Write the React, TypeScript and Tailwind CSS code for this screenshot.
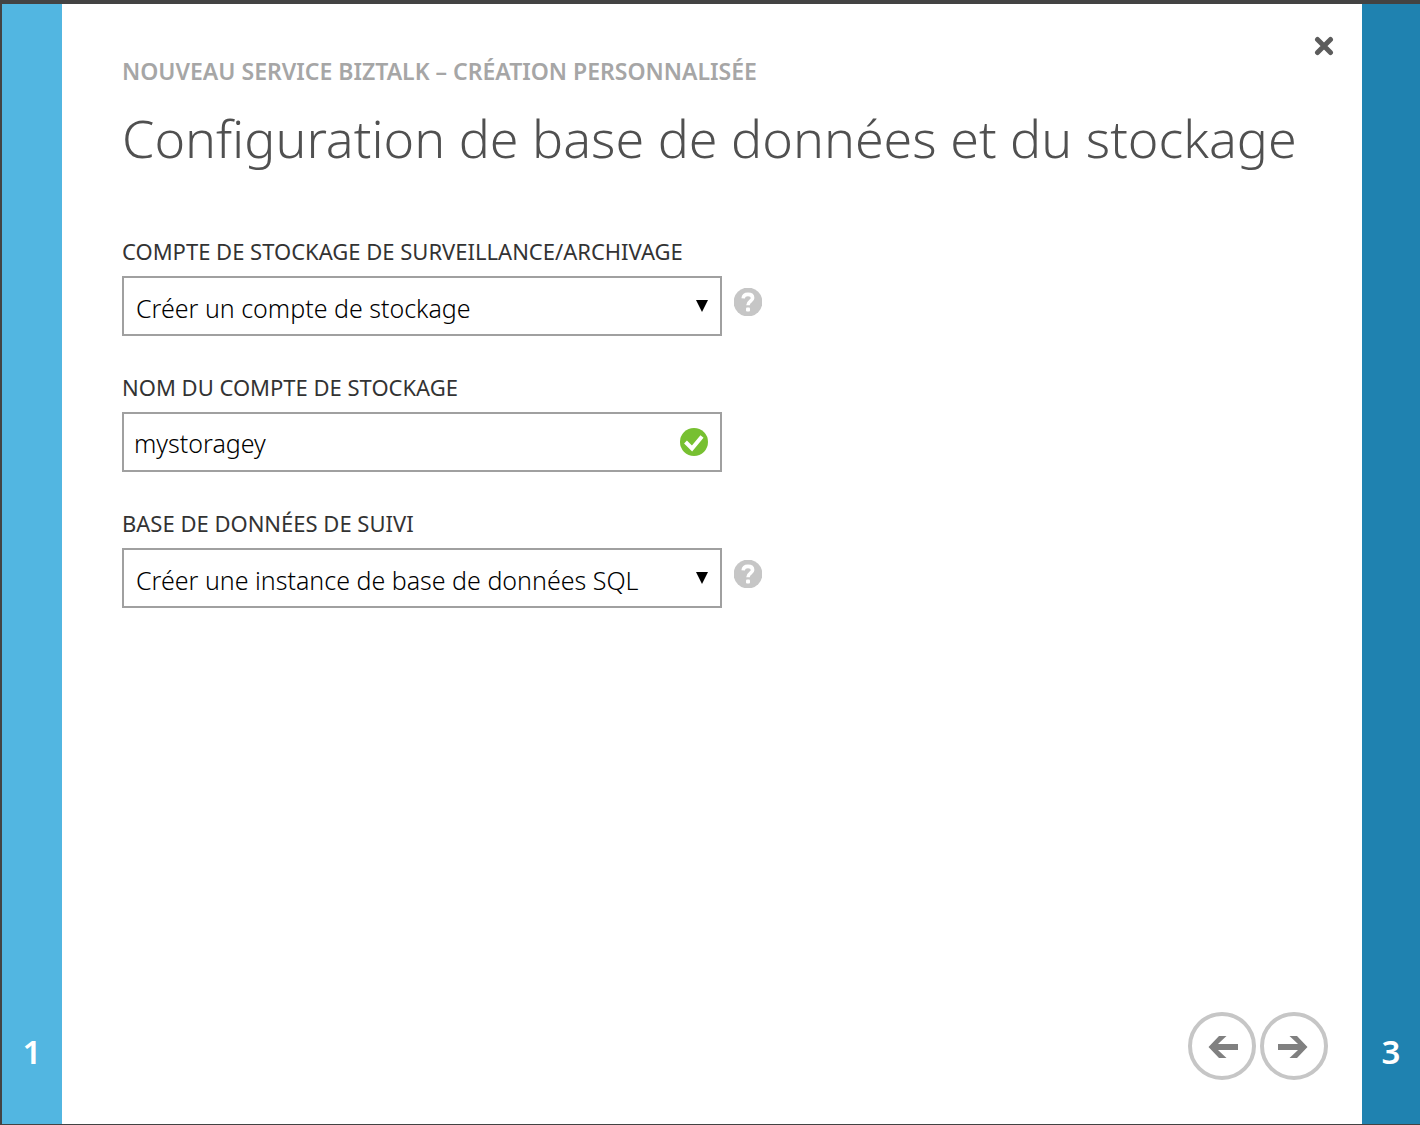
import React from "react";

interface FieldProps {
  id: string;
  label: string;
  help?: boolean;
  children: React.ReactNode;
}

function HelpButton({ label }: { label: string }) {
  return (
    <button type="button" aria-label={`Aide : ${label}`} className="shrink-0 mb-2">
      <svg width="28" height="28" viewBox="0 0 28 28" fill="none">
        <circle cx="14" cy="14" r="14.4" fill="#c6c6c6" />
        <path
          d="M9.2 10.4C9.4 7.8 11.4 6.4 14 6.4C16.8 6.4 18.6 7.8 18.6 10C18.6 13.2 14 13.2 14 17.2"
          stroke="#fff"
          strokeWidth="3.6"
        />
        <rect x="12" y="19.4" width="4" height="4.2" rx="1" fill="#fff" />
      </svg>
    </button>
  );
}

function Field({ id, label, help, children }: FieldProps) {
  return (
    <div className="flex flex-col">
      <label
        htmlFor={id}
        className="text-[22px] leading-[30px] font-[450] text-[#333] mb-2.5"
      >
        {label}
      </label>
      <div className="flex items-center gap-3">
        <div className="relative w-full max-w-[600px]">{children}</div>
        {help && <HelpButton label={label} />}
      </div>
    </div>
  );
}

function SelectBox({ id, value }: { id: string; value: string }) {
  return (
    <>
      <select
        id={id}
        className="block w-full h-[60px] appearance-none border-2 border-[#a0a0a0] bg-white pl-3 pr-10 pt-1.5 text-[25px] font-[350] text-black"
      >
        <option>{value}</option>
      </select>
      <svg
        className="absolute right-3.5 top-6 pointer-events-none"
        width="12"
        height="12"
        viewBox="0 0 12 12"
      >
        <path d="M0 0H12L6 12Z" fill="#000" />
      </svg>
    </>
  );
}

function NavButton({ label, back }: { label: string; back?: boolean }) {
  return (
    <button type="button" aria-label={label}>
      <svg width="68" height="68" viewBox="0 0 68 68" fill="none">
        <circle cx="34" cy="34" r="32" stroke="#c6c6c6" strokeWidth="4" />
        {back ? (
          <path
            d="M20.5 35L31 24H38.5L30 32H50V38H30L38.5 46H31Z"
            fill="#808080"
          />
        ) : (
          <path
            d="M47.5 35L37 24H29.5L38 32H18V38H38L29.5 46H37Z"
            fill="#808080"
          />
        )}
      </svg>
    </button>
  );
}

function App() {
  return (
    <div className="min-h-screen flex bg-white border-[#434343] border-t-4 border-l-2 border-b font-['Noto_Sans','Open_Sans',sans-serif]">
      <button
        type="button"
        className="w-[60px] shrink-0 flex items-end justify-center bg-[#52b6e1] pb-12 text-[33px] leading-12 font-semibold text-white"
      >
        1
      </button>

      <main className="flex-1 min-w-0 flex flex-col pl-[60px] pr-7">
        <header className="flex items-start justify-between">
          <div className="pt-13">
            <p className="text-[23px] leading-[30px] font-semibold text-[#a6a6a6]">
              NOUVEAU SERVICE BIZTALK – CRÉATION PERSONNALISÉE
            </p>
            <h1 className="text-[52px] leading-[84px] font-light text-[#505050] mt-2.5">
              Configuration de base de données et du stockage
            </h1>
          </div>
          <button type="button" aria-label="Fermer" className="shrink-0 mt-8">
            <svg width="20" height="20" viewBox="0 0 20 20">
              <path
                d="M3.5 3.5L16.5 16.5M16.5 3.5L3.5 16.5"
                stroke="#5c5c5c"
                strokeWidth="5"
                strokeLinecap="round"
              />
            </svg>
          </button>
        </header>

        <form className="flex flex-col gap-9 mt-14">
          <Field
            id="archive"
            label="COMPTE DE STOCKAGE DE SURVEILLANCE/ARCHIVAGE"
            help
          >
            <SelectBox id="archive" value="Créer un compte de stockage" />
          </Field>
          <Field id="name" label="NOM DU COMPTE DE STOCKAGE">
            <input
              id="name"
              type="text"
              defaultValue="mystoragey"
              className="block w-full h-[60px] border-2 border-[#a0a0a0] bg-white pl-2.5 pr-12 pt-0.5 text-[25px] font-[350] text-black"
            />
            <svg
              className="absolute right-3.5 top-4"
              width="28"
              height="28"
              viewBox="0 0 28 28"
              fill="none"
            >
              <circle cx="14" cy="14" r="14" fill="#77c031" />
              <path d="M5.5 14L12 20.5L22 8.5" stroke="#fff" strokeWidth="4" />
            </svg>
          </Field>
          <Field id="tracking" label="BASE DE DONNÉES DE SUIVI" help>
            <SelectBox
              id="tracking"
              value="Créer une instance de base de données SQL"
            />
          </Field>
        </form>

        <footer className="mt-auto flex justify-end gap-1 pb-11 pr-1.5">
          <NavButton label="Précédent" back />
          <NavButton label="Suivant" />
        </footer>
      </main>

      <button
        type="button"
        className="w-[58px] shrink-0 flex items-end justify-center bg-[#1f82b0] pb-12 text-[33px] leading-12 font-semibold text-white"
      >
        3
      </button>
    </div>
  );
}

export default App;
